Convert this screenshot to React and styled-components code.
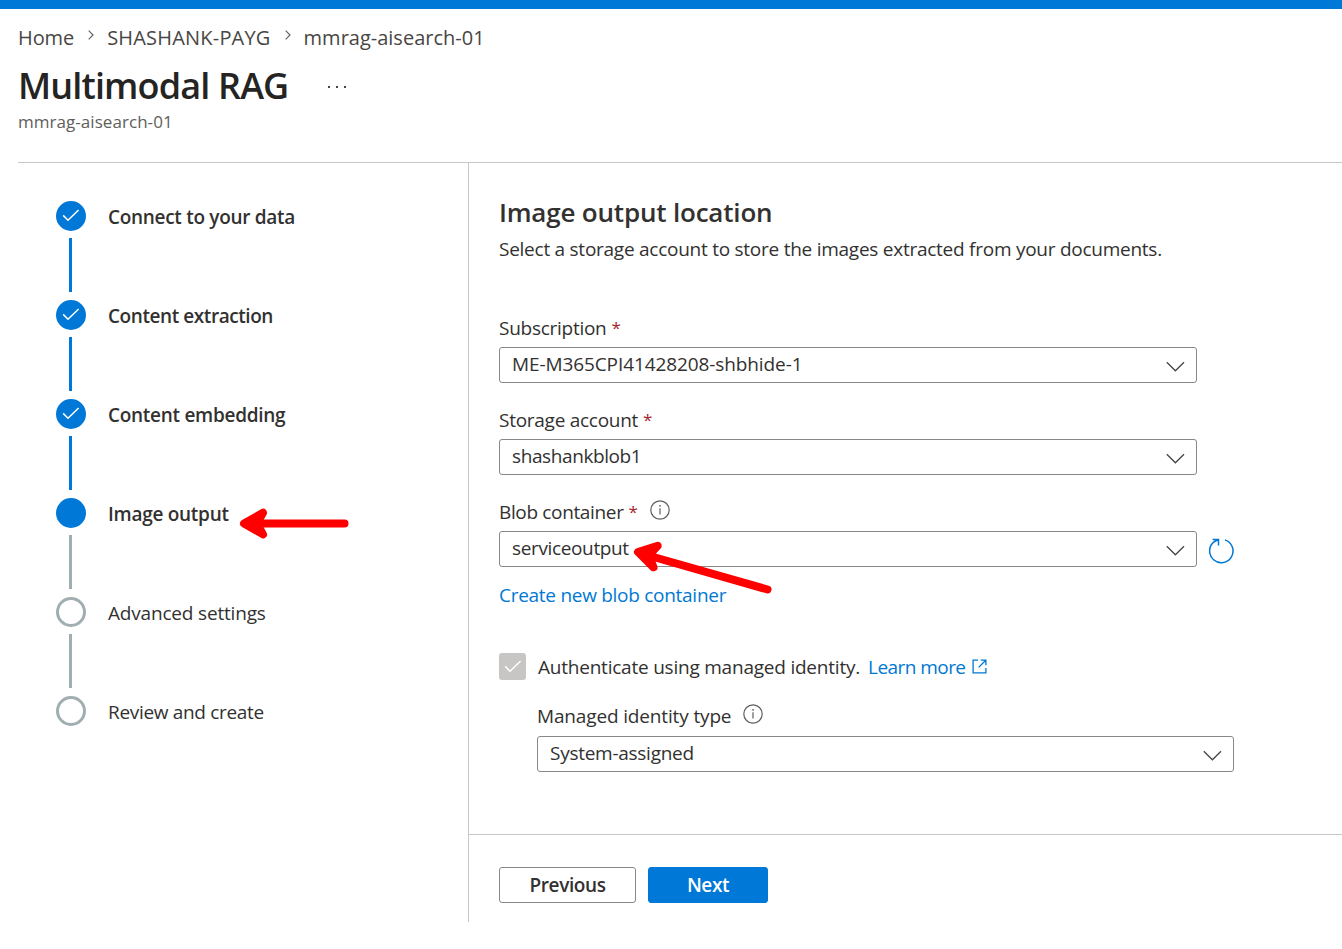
import React from 'react';
import styled, { createGlobalStyle } from 'styled-components';

const steps = [
  { title: 'Connect to your data', state: 'done', spacing: -0.3 },
  { title: 'Content extraction', state: 'done', spacing: -0.43 },
  { title: 'Content embedding', state: 'done', spacing: -0.28 },
  { title: 'Image output', state: 'current', spacing: -0.27 },
  { title: 'Advanced settings', state: 'todo', spacing: -0.18 },
  { title: 'Review and create', state: 'todo', spacing: -0.32 },
];

const CheckIcon = () => (
  <svg width="18" height="14" viewBox="0 0 18 14" fill="none">
    <path d="M1.2 6.4 6 11.2 16.6 1" stroke="#fff" strokeWidth="1.5" />
  </svg>
);

const CrumbIcon = () => (
  <svg width="6" height="10" viewBox="0 0 6 10" fill="none">
    <path d="M.7.7 5 5 .7 9.3" stroke="#605e5c" strokeWidth="1.1" />
  </svg>
);

const ChevronIcon = () => (
  <svg width="20" height="12" viewBox="0 0 20 12" fill="none">
    <path d="M1.8 1.2 10.4 9.8 19 1.2" stroke="#484644" strokeWidth="1.3" />
  </svg>
);

const InfoIcon = () => (
  <svg width="20" height="20" viewBox="0 0 20 20" fill="none">
    <circle cx="10" cy="10" r="9.2" stroke="#605e5c" strokeWidth="1.2" />
    <path d="M10 8.2v6.3" stroke="#605e5c" strokeWidth="1.2" />
    <circle cx="10" cy="5.8" r=".9" fill="#605e5c" />
  </svg>
);

const OpenIcon = () => (
  <svg width="15" height="15" viewBox="0 0 15 15" fill="none">
    <path
      d="M6 1.1H1.1v12.8h12.8V9M8.8 1.1h5.1v5.1M13.8 1.2 6.6 8.4"
      stroke="#0078d4"
      strokeWidth="1.3"
    />
  </svg>
);

const RefreshIcon = () => (
  <svg width="26" height="26" viewBox="0 0 26 26" fill="none">
    <path
      d="M16 1.9A11.7 11.7 0 1 1 5.2 3.7L9.2 1.8M3.6 1.6h5.9v5.8"
      stroke="#0078d4"
      strokeWidth="1.5"
    />
  </svg>
);

function Select({ value, spacing }) {
  return (
    <SelectBox>
      <SelectValue $spacing={spacing}>{value}</SelectValue>
      <ChevronIcon />
    </SelectBox>
  );
}

export default function App() {
  return (
    <Page>
      <GlobalStyle />
      <TopBar />
      <Header>
        <Breadcrumb>
          <Crumb $spacing={-0.1}>Home</Crumb>
          <CrumbIcon />
          <Crumb $spacing={0.2}>SHASHANK-PAYG</Crumb>
          <CrumbIcon />
          <Crumb $spacing={0}>mmrag-aisearch-01</Crumb>
        </Breadcrumb>
        <TitleRow>
          <PageTitle>Multimodal RAG</PageTitle>
          <More>
            <i />
            <i />
            <i />
          </More>
        </TitleRow>
        <SubTitle>mmrag-aisearch-01</SubTitle>
      </Header>

      <Body>
        <Sidebar>
          {steps.map(({ title, state, spacing }, i) => (
            <Step key={title}>
              <StepMark>
                <StepCircle $state={state}>{state === 'done' && <CheckIcon />}</StepCircle>
                {i < steps.length - 1 && <StepLine $done={state === 'done'} />}
              </StepMark>
              <StepTitle $bold={state !== 'todo'} $spacing={spacing}>
                {title}
              </StepTitle>
            </Step>
          ))}
        </Sidebar>

        <Main>
          <Form>
            <SectionTitle>Image output location</SectionTitle>
            <Description>
              Select a storage account to store the images extracted from your documents.
            </Description>

            <Field>
              <Label $spacing={-0.27}>
                Subscription <Required>*</Required>
              </Label>
              <Select value="ME-M365CPI41428208-shbhide-1" spacing={-0.1} />
            </Field>
            <Field>
              <Label $spacing={-0.27}>
                Storage account <Required>*</Required>
              </Label>
              <Select value="shashankblob1" spacing={-0.4} />
            </Field>
            <Field>
              <Label $spacing={-0.35}>
                Blob container <Required>*</Required>
                <InfoIcon />
              </Label>
              <SelectRow>
                <Select value="serviceoutput" spacing={-0.36} />
                <RefreshIcon />
              </SelectRow>
            </Field>
            <CreateLink>Create new blob container</CreateLink>

            <CheckRow>
              <CheckBox>
                <CheckIcon />
              </CheckBox>
              <CheckText>Authenticate using managed identity.</CheckText>
              <LearnMore>
                Learn more <OpenIcon />
              </LearnMore>
            </CheckRow>
            <NestedField>
              <Label $spacing={-0.15} $height={33}>
                Managed identity type
                <InfoIcon />
              </Label>
              <Select value="System-assigned" spacing={-0.27} />
            </NestedField>
          </Form>

          <Footer>
            <Button>Previous</Button>
            <Button $primary>Next</Button>
          </Footer>
        </Main>
      </Body>

      {/* red callout arrows drawn over the page */}
      <Callouts viewBox="0 0 1342 949">
        <path d="M256 523.5H344.5" />
        <path d="M244 523.5 263 512.8 257 523.5 263 534.4Z" />
        <path d="M650 556 767.5 589.5" />
        <path d="M638 552 657.7 545.8 649 555.2 653.5 567.3Z" />
      </Callouts>
    </Page>
  );
}

const GlobalStyle = createGlobalStyle`
  * {
    box-sizing: border-box;
  }

  body {
    margin: 0;
    background-color: #fff;
    color: #323130;
    font-family: 'Segoe UI', 'Open Sans', 'Noto Sans', sans-serif;
    font-size: 19px;
    line-height: 26px;
  }

  svg {
    display: block;
    flex-shrink: 0;
  }
`;

const Page = styled.div`
  position: relative;
  height: 949px;
  overflow: hidden;
  white-space: nowrap;
`;

const TopBar = styled.div`
  height: 9px;
  background-color: #0078d7;
`;

const Header = styled.header`
  height: 154px;
  margin-left: 18px;
  padding-top: 15px;
  border-bottom: 1px solid #c8c8c8;
`;

const Breadcrumb = styled.nav`
  display: flex;
  height: 28px;

  svg {
    margin: 6px 13px 0 14px;
  }
`;

const Crumb = styled.span`
  font-size: 20px;
  line-height: 28px;
  letter-spacing: ${({ $spacing }) => $spacing}px;
  color: #484644;
`;

const TitleRow = styled.div`
  display: flex;
  align-items: center;
  height: 48px;
  margin-top: 10px;
`;

const PageTitle = styled.h1`
  margin: 0;
  font-size: 36px;
  font-weight: 600;
  line-height: 48px;
  letter-spacing: -0.85px;
  color: #252423;
`;

const More = styled.div`
  display: flex;
  gap: 6px;
  margin: 1px 0 0 40px;

  i {
    width: 2px;
    height: 2px;
    background-color: #484644;
  }
`;

const SubTitle = styled.div`
  font-size: 17px;
  line-height: 24px;
  letter-spacing: 0.05px;
  color: #605e5c;
`;

const Body = styled.div`
  display: flex;
  height: 759px;
`;

const Sidebar = styled.aside`
  width: 469px;
  padding: 38px 0 0 56px;
  border-right: 1px solid #c8c8c8;
`;

const Step = styled.div`
  display: flex;
  gap: 22px;
  height: 99px;
`;

const StepMark = styled.div`
  width: 30px;
`;

const StepCircle = styled.div`
  display: flex;
  align-items: center;
  justify-content: center;
  width: 30px;
  height: 30px;
  border: 3px solid ${({ $state }) => ($state === 'todo' ? '#a0aeb2' : '#0078d7')};
  border-radius: 50%;
  background-color: ${({ $state }) => ($state === 'todo' ? '#fff' : '#0078d7')};
`;

const StepLine = styled.div`
  width: 3px;
  height: 54px;
  margin: 7px 0 0 13px;
  background-color: ${({ $done }) => ($done ? '#0078d7' : '#a0aeb2')};
`;

const StepTitle = styled.div`
  line-height: 33px;
  font-weight: ${({ $bold }) => ($bold ? 600 : 400)};
  letter-spacing: ${({ $spacing }) => $spacing}px;
`;

const Main = styled.main`
  flex: 1;
`;

const Form = styled.section`
  height: 671px;
  padding: 32px 0 0 30px;
`;

const SectionTitle = styled.h2`
  margin: 0;
  font-size: 26px;
  font-weight: 600;
  line-height: 34px;
  letter-spacing: -0.19px;
`;

const Description = styled.p`
  margin: 7px 0 53px;
  letter-spacing: -0.255px;
`;

const Field = styled.div`
  width: 698px;
  height: 92px;
`;

const Label = styled.div`
  display: flex;
  height: ${({ $height = 32 }) => $height}px;
  letter-spacing: ${({ $spacing }) => $spacing}px;

  svg {
    margin: 1px 0 0 12px;
  }
`;

const Required = styled.span`
  margin-left: 5px;
  font-size: 17px;
  color: #a4262c;
`;

const SelectBox = styled.div`
  display: flex;
  flex-shrink: 0;
  justify-content: space-between;
  width: 100%;
  height: 36px;
  padding: 0 11px 0 12px;
  border: 1px solid #8a8886;
  border-radius: 3px;

  svg {
    margin-top: 13px;
  }
`;

const SelectValue = styled.span`
  line-height: 32px;
  letter-spacing: ${({ $spacing }) => $spacing}px;
`;

const SelectRow = styled.div`
  display: flex;
  gap: 12px;

  > svg {
    margin-top: 7px;
  }
`;

const CreateLink = styled.a`
  display: block;
  margin-top: -9px;
  letter-spacing: -0.28px;
  color: #0078d4;
`;

const CheckRow = styled.div`
  display: flex;
  height: 27px;
  margin-top: 45px;
  line-height: 28px;
`;

const CheckBox = styled.div`
  display: flex;
  align-items: center;
  justify-content: center;
  width: 27px;
  height: 27px;
  border-radius: 3px;
  background-color: #c8c6c4;
`;

const CheckText = styled.span`
  margin-left: 12px;
  letter-spacing: -0.22px;
`;

const LearnMore = styled.a`
  display: flex;
  margin-left: 8px;
  letter-spacing: -0.55px;
  color: #0078d4;

  svg {
    margin: 6px 0 0 7px;
  }
`;

const NestedField = styled.div`
  width: 697px;
  margin: 23px 0 0 38px;
`;

const Footer = styled.footer`
  display: flex;
  gap: 12px;
  padding: 32px 0 0 30px;
  border-top: 1px solid #c8c8c8;
`;

const Button = styled.button`
  width: ${({ $primary }) => ($primary ? 120 : 137)}px;
  height: 36px;
  padding: 0;
  border: 1px solid ${({ $primary }) => ($primary ? '#0078d7' : '#8a8886')};
  border-radius: 3px;
  background-color: ${({ $primary }) => ($primary ? '#0078d7' : '#fff')};
  color: ${({ $primary }) => ($primary ? '#fff' : '#323130')};
  font: inherit;
  font-weight: 600;
  letter-spacing: -0.4px;
`;

const Callouts = styled.svg`
  position: absolute;
  top: 0;
  left: 0;
  width: 1342px;
  height: 949px;
  pointer-events: none;
  fill: #f00;
  stroke: #f00;
  stroke-width: 8px;
  stroke-linecap: round;
  stroke-linejoin: round;
`;
